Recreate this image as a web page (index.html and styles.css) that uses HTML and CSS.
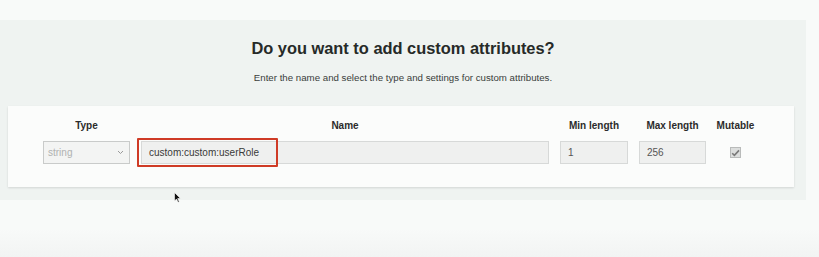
FILE: index.html
```html
<!DOCTYPE html>
<html>
<head>
<meta charset="utf-8">
<link rel="stylesheet" href="styles.css">
</head>
<body>
<div class="top"></div>
<section class="panel">
  <h1 class="title">Do you want to add custom attributes?</h1>
  <p class="subtitle">Enter the name and select the type and settings for custom attributes.</p>
  <div class="card">
    <div class="grid">
      <div class="head">Type</div>
      <div class="head">Name</div>
      <div class="head">Min length</div>
      <div class="head">Max length</div>
      <div class="head">Mutable</div>

      <div class="select">
        <span>string</span>
        <svg class="chev" width="7" height="5" viewBox="0 0 7 5"><path d="M1 1l2.5 2.5L6 1" fill="none" stroke="#9a9a9a" stroke-width="1"/></svg>
      </div>
      <div class="name-cell">
        <div class="input name">custom:custom:userRole</div>
        <div class="highlight"></div>
      </div>
      <div class="input">1</div>
      <div class="input">256</div>
      <div class="check-cell">
        <span class="check">
          <svg width="9" height="8" viewBox="0 0 9 8"><path d="M1.2 4.2l2.2 2.2L8 1.4" fill="none" stroke="#7a7a7a" stroke-width="1.6"/></svg>
        </span>
      </div>
    </div>
    <svg class="cursor" width="7" height="11" viewBox="0 0 7 11"><path d="M0.5 0.5v8.5l2-2 1.6 3.3 1.2-.6-1.6-3.2h2.8z" fill="#111" stroke="#fff" stroke-width="0.6"/></svg>
  </div>
</section>
<div class="bottom"></div>
</body>
</html>
```

FILE: styles.css
```css
html, body {
  margin: 0;
  padding: 0;
}
body {
  width: 819px;
  height: 257px;
  overflow: hidden;
  background: #f8faf9;
  font-family: "Liberation Sans", Arial, Helvetica, sans-serif;
  color: #2a2a2a;
}
.top {
  height: 20px;
}
.panel {
  width: 806px;
  height: 180px;
  background: #eff3f1;
  box-sizing: border-box;
  padding-top: 17px;
  display: flex;
  flex-direction: column;
  align-items: center;
}
.title {
  margin: 0;
  font-size: 16.4px;
  font-weight: bold;
  color: #262a28;
  line-height: 22px;
}
.subtitle {
  margin: 13px 0 0 0;
  font-size: 9.7px;
  color: #3a3d3b;
  line-height: 12px;
}
.card {
  position: relative;
  align-self: flex-start;
  margin-left: 8px;
  margin-top: 22px;
  width: 786px;
  height: 81px;
  box-sizing: border-box;
  background: #fbfcfb;
  box-shadow: 0 1px 2px rgba(0,0,0,0.12);
  padding: 14px 40px 0 35px;
}
.grid {
  display: grid;
  grid-template-columns: 87px 408px 68px 67px 38px;
  column-gap: 11px;
  row-gap: 9px;
  grid-template-rows: 12px 23px;
}
.grid > :nth-child(5),
.grid > :nth-child(10) {
  margin-left: -1px;
}
.head {
  font-size: 10px;
  font-weight: bold;
  text-align: center;
  line-height: 12px;
  color: #2b2b2b;
  white-space: nowrap;
}
.select {
  box-sizing: border-box;
  height: 23px;
  border: 1px solid #c9cbca;
  background: #f3f4f3;
  display: flex;
  align-items: center;
  justify-content: space-between;
  padding: 0 5px 0 4px;
  font-size: 10px;
  color: #b0b2b1;
}
.input {
  box-sizing: border-box;
  height: 23px;
  border: 1px solid #d7d9d8;
  background: #eff0ef;
  font-size: 10px;
  color: #555;
  display: flex;
  align-items: center;
  padding-left: 7px;
}
.name-cell {
  position: relative;
}
.input.name {
  color: #3a3a3a;
  padding-left: 7px;
}
.highlight {
  position: absolute;
  left: -4px;
  top: -3px;
  width: 141px;
  height: 29px;
  box-sizing: border-box;
  border: 2px solid #cf3b26;
  border-radius: 1px;
}
.check-cell {
  display: flex;
  align-items: center;
  justify-content: center;
}
.check {
  box-sizing: border-box;
  width: 11px;
  height: 11px;
  border: 1px solid #b9bbba;
  background: #dcdedd;
  display: flex;
  align-items: center;
  justify-content: center;
}
.cursor {
  position: absolute;
  left: 166px;
  top: 86px;
}
.bottom {
  height: 57px;
  background: linear-gradient(#f8faf9 0%, #f8faf9 50%, #f2f4f3 100%);
}
```
